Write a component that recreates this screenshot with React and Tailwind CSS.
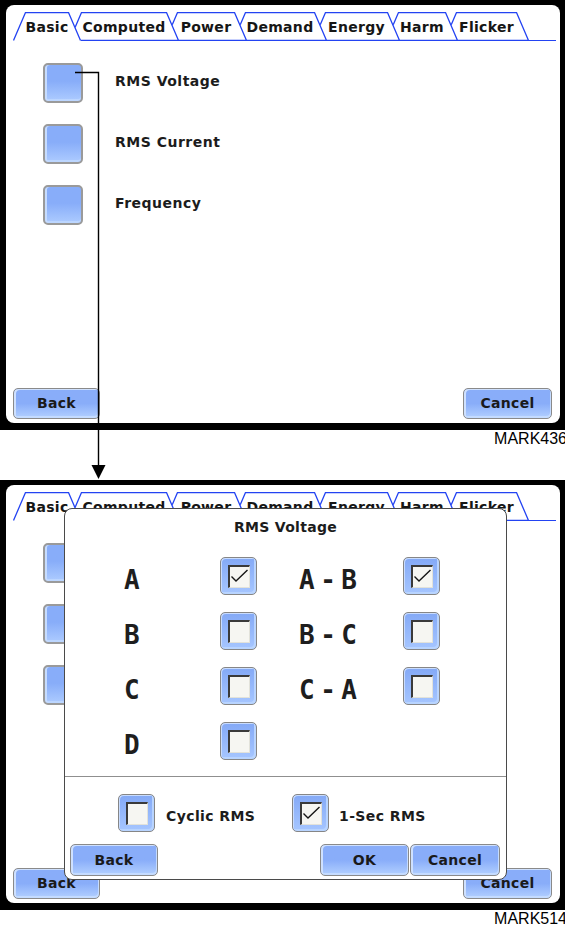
import React from "react";

const BLUE = "#2343f2";

const tabs = [
  { label: "Basic", width: 68, w: "w-[68px]", ml: "", z: "z-[7]", active: true },
  { label: "Computed", width: 110, w: "w-[110px]", ml: "-ml-[12px]", z: "z-[6]" },
  { label: "Power", width: 82, w: "w-[82px]", ml: "-ml-[14px]", z: "z-[5]" },
  { label: "Demand", width: 94, w: "w-[94px]", ml: "-ml-[14px]", z: "z-[4]" },
  { label: "Energy", width: 87, w: "w-[87px]", ml: "-ml-[14px]", z: "z-[3]" },
  { label: "Harm", width: 72, w: "w-[72px]", ml: "-ml-[14px]", z: "z-[2]" },
  { label: "Flicker", width: 85, w: "w-[85px]", ml: "-ml-[14px]", z: "z-[1]" },
];

const items = ["RMS Voltage", "RMS Current", "Frequency"];

function Tab({ tab }) {
  const w = tab.width;
  const outline = tab.active
    ? `0.5,28.5 12.5,0.5 ${w - 12.5},0.5 ${w - 0.5},28.5`
    : `0.5,28.5 12.5,0.5 ${w - 12.5},0.5 ${w - 0.5},28.5 0.5,28.5`;
  return (
    <div className={`relative h-[29px] shrink-0 ${tab.w} ${tab.ml} ${tab.z}`}>
      <svg className="absolute inset-0" width={w} height="29" viewBox={`0 0 ${w} 29`}>
        <polygon points={`0,29 12,0 ${w - 12},0 ${w},29`} fill="#fff" />
        <polyline points={outline} fill="none" stroke={BLUE} strokeWidth="1.3" />
      </svg>
      <span className="absolute inset-x-0 top-[7px] text-center text-[14px] leading-[16px] font-bold tracking-[0.3px] text-[#161616]">
        {tab.label}
      </span>
    </div>
  );
}

function TabStrip() {
  return (
    <div className="mt-[7px] flex shrink-0 pl-[7px] pr-[4px]">
      {tabs.map((t) => (
        <Tab key={t.label} tab={t} />
      ))}
      <div className="h-[29px] flex-1 border-b border-[#2343f2]" />
    </div>
  );
}

function SquareButton() {
  return (
    <div className="h-[40px] w-[40px] shrink-0 rounded-[5px] border-2 border-[#9a9a9a] bg-linear-to-b from-[#88adf9] from-45% to-[#adcbff] shadow-[inset_2px_0_0_#c6dcff,inset_0_-2px_0_#bcd6ff]" />
  );
}

function WideButton({ children, className = "" }) {
  return (
    <div
      className={`flex shrink-0 items-center justify-center rounded-[5px] border border-[#8a8a8a] bg-linear-to-b from-[#89adf9] from-50% to-[#b3d0ff] text-[14px] font-bold tracking-[0.3px] text-[#1a1a1a] shadow-[inset_2px_1px_0_#cfe1ff,inset_-1px_-2px_0_#c4dbff] ${className}`}
    >
      {children}
    </div>
  );
}

function CheckBox({ checked }) {
  return (
    <div className="flex h-[38px] w-[37px] shrink-0 items-center justify-center rounded-[5px] border border-[#868686] bg-linear-to-b from-[#84a9f6] to-[#a6c6ff] shadow-[inset_1px_1px_0_#c8dcff,inset_-2px_-2px_0_#b8d4ff]">
      <div className="relative h-[23px] w-[22px] border-b border-l-2 border-r border-t-2 border-b-[#e2e2da] border-l-[#3a3a3a] border-r-[#e2e2da] border-t-[#3a3a3a] bg-[#f6f6f2]">
        {checked && (
          <svg className="absolute left-0 top-0" width="19" height="20" viewBox="0 0 19 20">
            <polyline points="1.5,9.5 6,14 17.5,3" fill="none" stroke="#151515" strokeWidth="1.4" />
          </svg>
        )}
      </div>
    </div>
  );
}

const rows = [
  { a: "A", ac: true, b: "A-B", bc: true },
  { a: "B", ac: false, b: "B-C", bc: false },
  { a: "C", ac: false, b: "C-A", bc: false },
  { a: "D", ac: false },
];

function Dialog() {
  return (
    <div className="absolute left-[58px] top-[23px] z-20 flex h-[372px] w-[443px] flex-col rounded-[8px] border border-[#4a4a4a] bg-white">
      <div className="mt-[10px] shrink-0 text-center text-[14px] leading-[16px] font-bold tracking-[0.3px] text-[#1c1c1c]">
        RMS Voltage
      </div>
      <div className="mt-[22px] flex shrink-0 flex-col gap-[17px]">
        {rows.map((r) => (
          <div key={r.a} className="flex h-[38px] items-start pl-[59px]">
            <span className="w-[96px] pt-[8px] font-['DejaVu_Sans_Mono',monospace] text-[26px] leading-[30px] font-bold tracking-[5.5px] text-[#1e1e1e]">
              {r.a}
            </span>
            <CheckBox checked={r.ac} />
            {r.b && (
              <>
                <span className="ml-[42px] w-[104px] pt-[8px] font-['DejaVu_Sans_Mono',monospace] text-[26px] leading-[30px] font-bold tracking-[5.5px] text-[#1e1e1e]">
                  {r.b}
                </span>
                <CheckBox checked={r.bc} />
              </>
            )}
          </div>
        ))}
      </div>
      <div className="mt-[16px] h-px shrink-0 bg-[#8f8f8f]" />
      <div className="mt-[17px] flex shrink-0 items-center pl-[53px]">
        <CheckBox checked={false} />
        <span className="ml-[11px] mt-[6px] w-[126px] text-[14px] leading-[16px] font-bold tracking-[0.4px] text-[#1c1c1c]">
          Cyclic RMS
        </span>
        <CheckBox checked />
        <span className="ml-[10px] mt-[6px] text-[14px] leading-[16px] font-bold tracking-[0.4px] text-[#1c1c1c]">
          1-Sec RMS
        </span>
      </div>
      <div className="mt-[12px] flex shrink-0 pl-[5px] pr-[6px]">
        <WideButton className="h-[32px] w-[88px]">Back</WideButton>
        <WideButton className="ml-auto h-[32px] w-[89px]">OK</WideButton>
        <WideButton className="ml-[1px] h-[32px] w-[90px]">Cancel</WideButton>
      </div>
    </div>
  );
}

function Screen({ dialog }) {
  return (
    <div className="h-[430px] bg-black pb-[7px] pl-[6px] pr-[5px] pt-[5px]">
      <div className="relative flex h-full flex-col rounded-[8px] bg-white">
        <TabStrip />
        <div className="mt-[22px] flex flex-col gap-[21px] pl-[37px]">
          {items.map((label) => (
            <div key={label} className="flex items-start">
              <SquareButton />
              <span className="ml-[32px] pt-[10px] text-[14px] leading-[16px] font-bold tracking-[0.5px] text-[#1c1c1c]">
                {label}
              </span>
            </div>
          ))}
        </div>
        <div className="mt-auto flex justify-between pb-[4px] pl-[7px] pr-[8px]">
          <WideButton className="h-[31px] w-[87px]">Back</WideButton>
          <WideButton className="h-[31px] w-[89px]">Cancel</WideButton>
        </div>
        {dialog && <Dialog />}
      </div>
    </div>
  );
}

export default function App() {
  return (
    <div className="relative h-[926px] w-[565px] overflow-hidden bg-white font-['DejaVu_Sans',sans-serif]">
      <Screen />
      <div className="-mr-[2px] h-[50px] text-right font-['Liberation_Sans',Arial,sans-serif] text-[16px] leading-[17px] text-black">
        MARK436
      </div>
      <Screen dialog />
      <div className="-mr-[2px] h-[16px] text-right font-['Liberation_Sans',Arial,sans-serif] text-[16px] leading-[17px] text-black">
        MARK514
      </div>

      {/* connector arrow from the RMS Voltage button down to the dialog screen */}
      <svg className="pointer-events-none absolute left-0 top-0 z-30" width="565" height="926" viewBox="0 0 565 926">
        <polyline points="75,72.5 98.5,72.5 98.5,467" fill="none" stroke="#000" strokeWidth="1.4" />
        <polygon points="91.5,465 105.5,465 98.5,479" fill="#000" />
      </svg>
    </div>
  );
}
